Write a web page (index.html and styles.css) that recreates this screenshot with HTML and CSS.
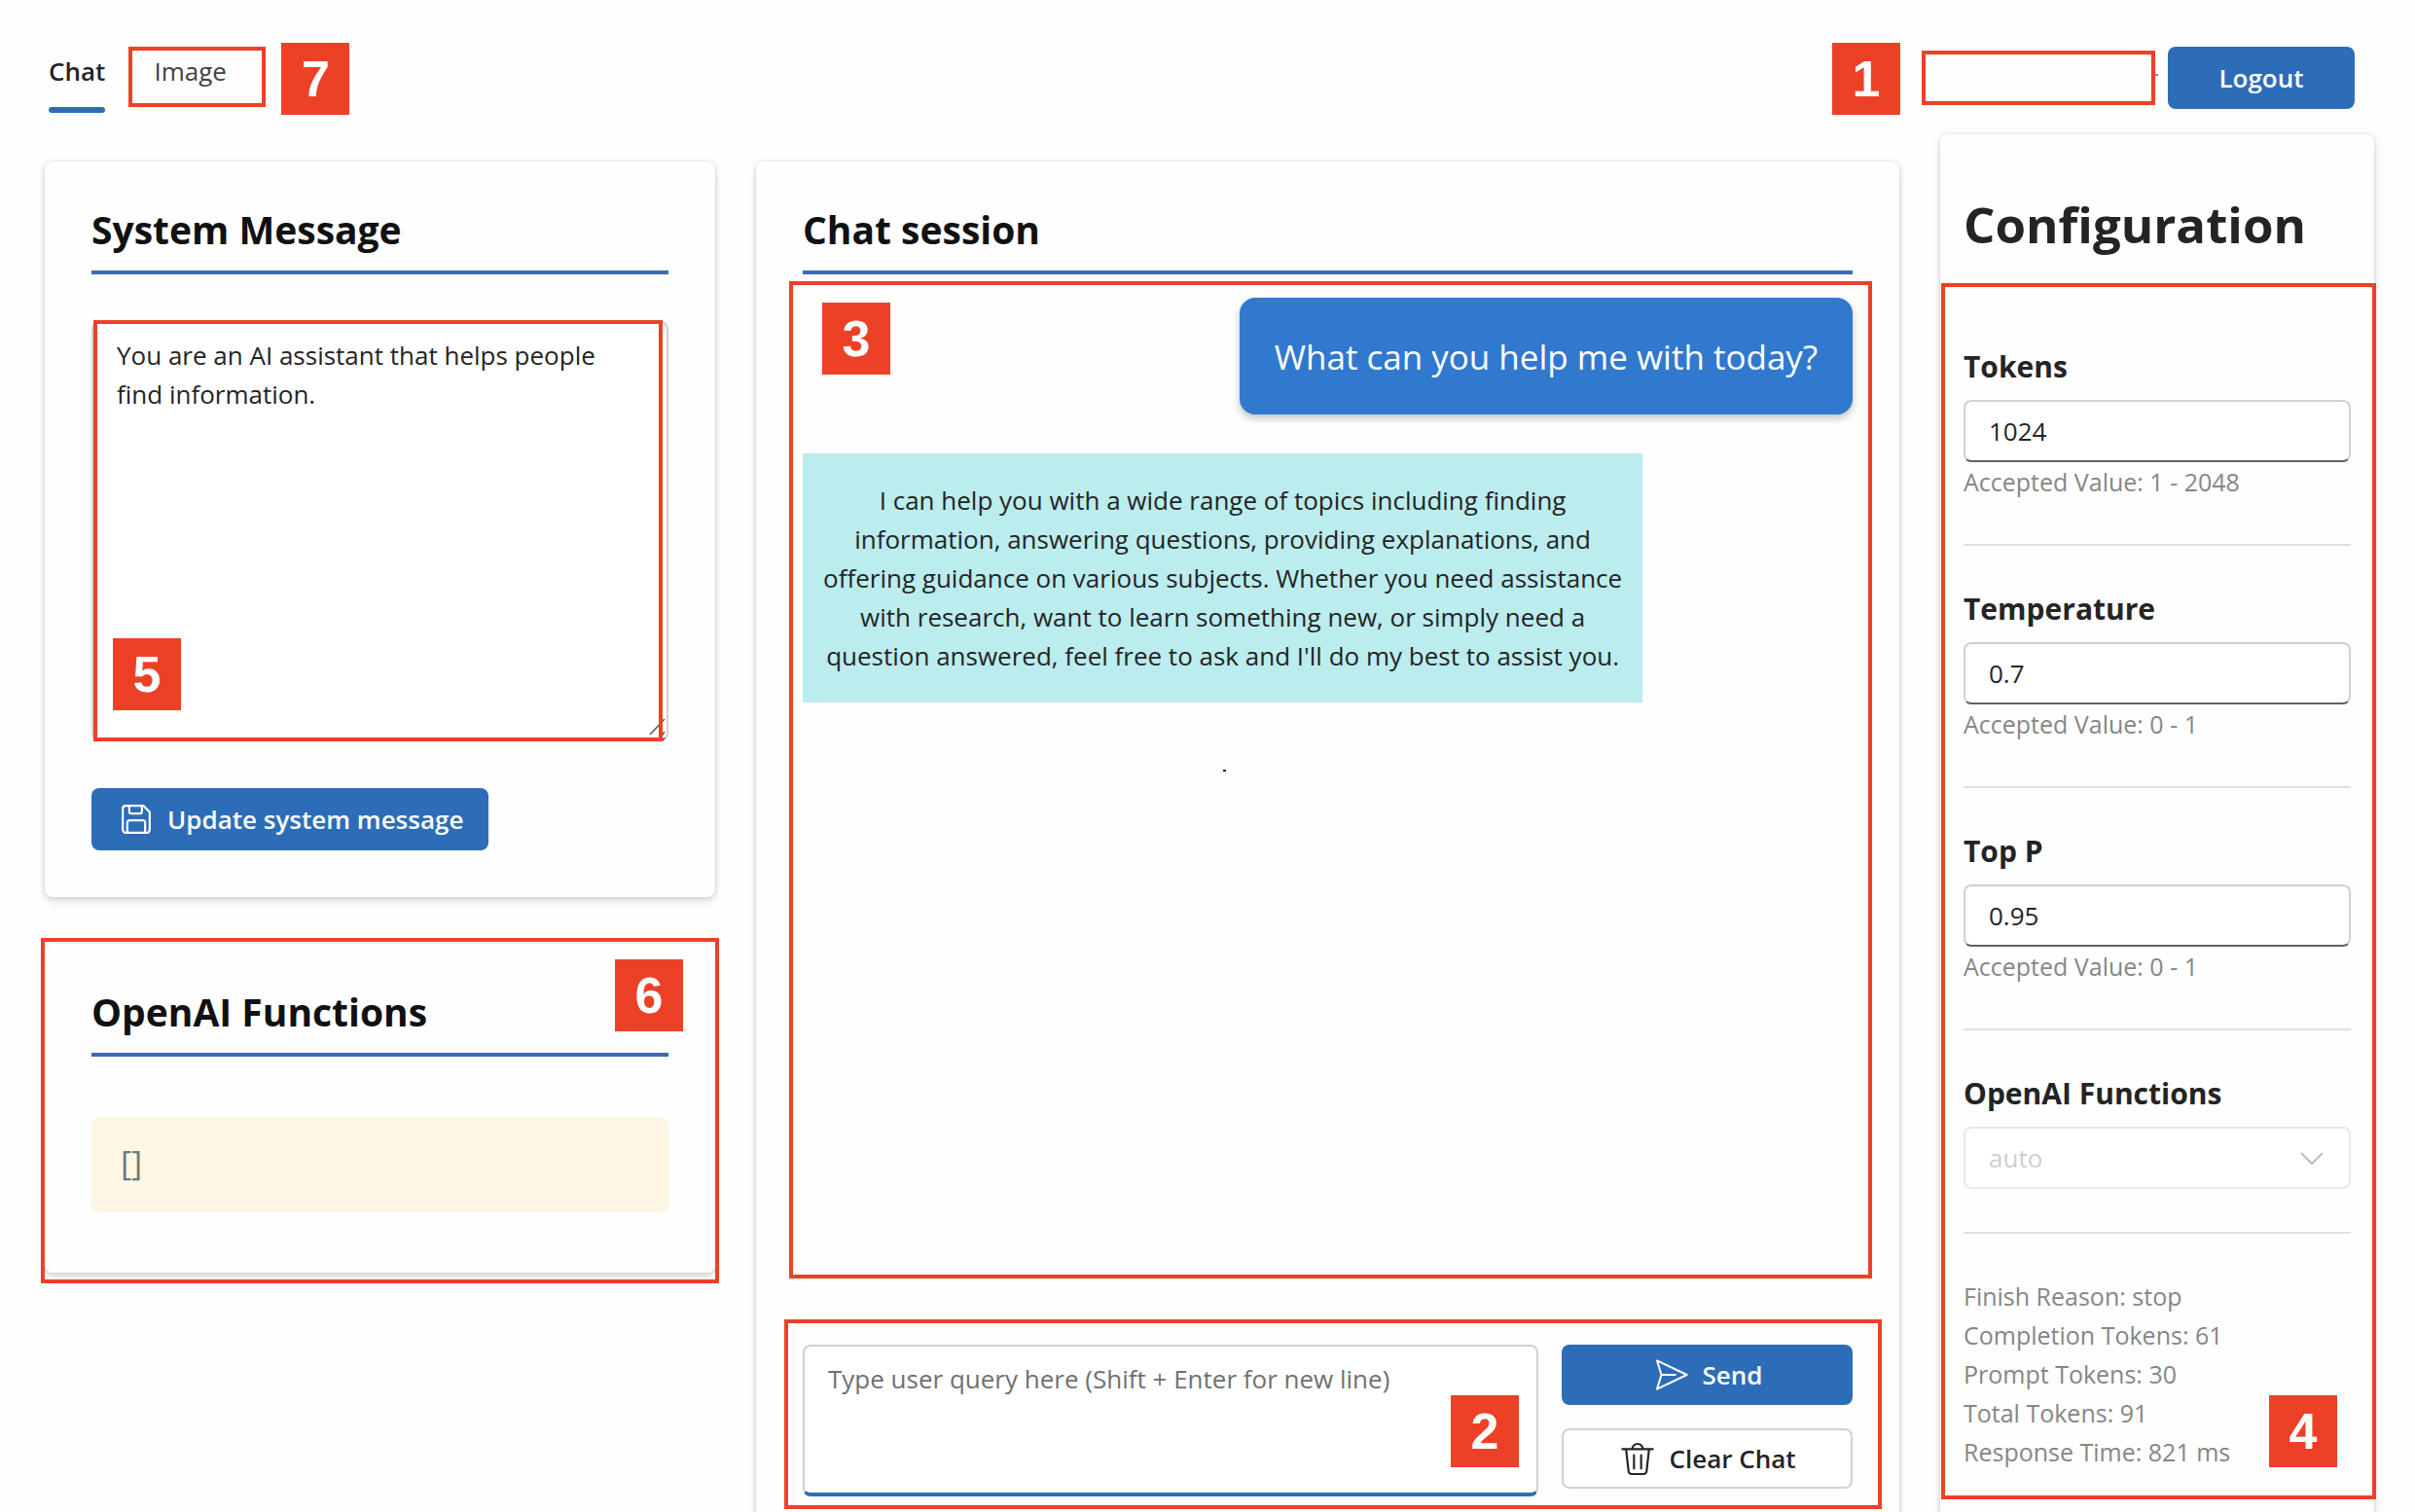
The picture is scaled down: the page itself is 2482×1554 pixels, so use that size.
FILE: index.html
```html
<!DOCTYPE html>
<html lang="en">
<head>
<meta charset="utf-8">
<meta name="viewport" content="width=device-width, initial-scale=1">
<title>Chat</title>
<link rel="stylesheet" href="styles.css">
</head>
<body>
<div class="app">
  <header class="topbar">
    <nav class="tabs">
      <a class="tab tab-active" href="#chat">Chat</a>
      <div class="anchor">
        <a class="tab" href="#image">Image</a>
        <span class="frame frame-tab"></span>
        <span class="badge badge-tab">7</span>
      </div>
    </nav>
    <div class="account">
      <span class="badge-inline">1</span>
      <span class="user"></span>
      <button class="btn btn-primary btn-logout" type="button">Logout</button>
    </div>
  </header>

  <main class="columns">
    <div class="side">
      <section class="card">
        <h2 class="card-title" id="system-title">System Message</h2>
        <div class="anchor system-box">
          <textarea class="textarea system-text" aria-labelledby="system-title">You are an AI assistant that helps people find information.</textarea>
          <svg class="grip" viewBox="0 0 18 24" aria-hidden="true"><path d="M1 17 16 1M9 24 16 14M13 24 16 20" fill="none" stroke="#555" stroke-width="1.5"/></svg>
          <span class="frame frame-system"></span>
          <span class="badge badge-system">5</span>
        </div>
        <button class="btn btn-primary btn-update" type="button">
          <svg class="icon" viewBox="0 0 24 24" aria-hidden="true"><g fill="none" stroke="currentColor" stroke-width="1.3" stroke-linejoin="round"><path d="M5.5 3.7H16.6L20.3 7.6V18.5A1.8 1.8 0 0 1 18.5 20.3H5.5A1.8 1.8 0 0 1 3.7 18.5V5.5A1.8 1.8 0 0 1 5.5 3.7Z"/><path d="M7.7 3.7V7.2A1.3 1.3 0 0 0 9 8.5H14.2A1.3 1.3 0 0 0 15.5 7.2V3.7M6.5 20.3V14.2A1.5 1.5 0 0 1 8 12.7H16A1.5 1.5 0 0 1 17.5 14.2V20.3"/></g></svg>
          Update system message
        </button>
      </section>

      <section class="card anchor">
        <h2 class="card-title">OpenAI Functions</h2>
        <pre class="code"><code>[]</code></pre>
        <span class="frame frame-functions"></span>
        <span class="badge badge-functions">6</span>
      </section>
    </div>

    <section class="card chat">
      <h2 class="card-title">Chat session</h2>
      <div class="log anchor">
        <p class="message message-user">What can you help me with today?</p>
        <p class="message message-reply">I can help you with a wide range of topics including finding information, answering questions, providing explanations, and offering guidance on various subjects. Whether you need assistance with research, want to learn something new, or simply need a question answered, feel free to ask and I'll do my best to assist you.</p>
        <div class="cursor-dot"></div>
        <span class="frame frame-log"></span>
        <span class="badge badge-log">3</span>
      </div>
      <form class="composer anchor">
        <div class="query anchor">
          <textarea class="textarea query-text" aria-label="User query" placeholder="Type user query here (Shift + Enter for new line)"></textarea>
          <span class="badge badge-query">2</span>
        </div>
        <div class="actions">
          <button class="btn btn-primary" type="button">
            <svg class="icon" viewBox="0 0 24 24" aria-hidden="true"><path d="M3 3.2 21.4 12 3 20.8 5.7 12ZM5.7 12H14.3" fill="none" stroke="currentColor" stroke-width="1.2" stroke-linejoin="round" stroke-linecap="round"/></svg>
            Send
          </button>
          <button class="btn btn-outline" type="button">
            <svg class="icon" viewBox="0 0 24 24" aria-hidden="true"><path d="M2.6 6.2H21.4M8.8 6.2A3.2 3.2 0 0 1 15.2 6.2M4.9 6.2 6.4 19.6A2 2 0 0 0 8.4 21.6H15.6A2 2 0 0 0 17.6 19.6L19.1 6.2M9.8 10V18.2M14.2 10V18.2" fill="none" stroke="currentColor" stroke-width="1.3" stroke-linecap="round"/></svg>
            Clear Chat
          </button>
        </div>
        <span class="frame frame-composer"></span>
      </form>
    </section>

    <aside class="card config">
      <h1 class="config-title">Configuration</h1>
      <div class="settings anchor">
        <div class="field">
          <label class="label" for="tokens">Tokens</label>
          <input class="input" id="tokens" type="text" value="1024">
          <span class="hint">Accepted Value: 1 - 2048</span>
        </div>
        <div class="field">
          <label class="label" for="temperature">Temperature</label>
          <input class="input" id="temperature" type="text" value="0.7">
          <span class="hint">Accepted Value: 0 - 1</span>
        </div>
        <div class="field">
          <label class="label" for="top-p">Top P</label>
          <input class="input" id="top-p" type="text" value="0.95">
          <span class="hint">Accepted Value: 0 - 1</span>
        </div>
        <div class="field">
          <label class="label" for="functions">OpenAI Functions</label>
          <div class="anchor select-box">
            <select class="input select" id="functions" disabled><option>auto</option></select>
            <svg class="chevron" viewBox="0 0 24 14" aria-hidden="true"><path d="M1 1 12 12 23 1" fill="none" stroke="#bdbdbd" stroke-width="2"/></svg>
          </div>
        </div>
        <ul class="stats">
          <li>Finish Reason: stop</li>
          <li>Completion Tokens: 61</li>
          <li>Prompt Tokens: 30</li>
          <li>Total Tokens: 91</li>
          <li>Response Time: 821 ms</li>
        </ul>
        <span class="frame frame-settings"></span>
        <span class="badge badge-settings">4</span>
      </div>
    </aside>
  </main>
</div>
</body>
</html>
```
FILE: styles.css
```css
:root {
  --ink: #242424;
  --muted: #868686;
  --brand: #2d6db8;
  --line: #d1d1d1;
  --mark: #ec4127;
}

* { box-sizing: border-box; }

body {
  margin: 0;
  background: #fefefe;
  color: var(--ink);
  font: 26px/40px "Open Sans", "Noto Sans", sans-serif;
}

h1, h2, p, ul, pre { margin: 0; padding: 0; }
button, input, select, textarea { font: inherit; color: inherit; }

.app { height: 100vh; overflow: hidden; }
.anchor { position: relative; }

/* Top bar */
.topbar {
  display: flex;
  justify-content: space-between;
  align-items: flex-start;
  height: 138px;
  padding: 48px 62px 0 50px;
}
.tabs { display: flex; gap: 50px; }
.tab {
  display: block;
  padding: 5px 0 17px;
  color: #424242;
  text-decoration: none;
}
.tab-active {
  color: var(--ink);
  font-weight: 600;
}
.tab-active::after {
  content: "";
  display: block;
  height: 6px;
  margin: 17px 0 -17px;
  border-radius: 4px;
  background: var(--brand);
}
.account { display: flex; align-items: center; }
.user {
  width: 240px;
  height: 56px;
  margin: 0 13px 0 22px;
  border: 4px solid var(--mark);
}
.user::after {
  content: "";
  display: block;
  width: 3px;
  height: 2px;
  margin: 20px 0 0 236px;
  background: #8a8a8a;
}

/* Buttons */
.btn {
  display: flex;
  align-items: center;
  justify-content: center;
  gap: 12px;
  height: 64px;
  padding: 0 26px;
  border: 0;
  border-radius: 8px;
  font-weight: 600;
}
.btn-primary { background: var(--brand); color: #fff; }
.btn-outline { background: #fff; border: 2px solid var(--line); }
.btn-logout { width: 192px; }
.btn-update { margin-top: 48px; }
.icon { width: 40px; height: 40px; flex: none; }

/* Columns and cards */
.columns {
  display: grid;
  grid-template-columns: 689fr 1175fr 446fr;
  gap: 42px;
  align-items: start;
  padding: 0 42px 0 46px;
}
.side {
  display: grid;
  gap: 48px;
  margin-top: 28px;
}
.card {
  padding: 46px 48px 48px;
  border-radius: 8px;
  background: #fefefe;
  box-shadow: 0 0 4px rgba(0, 0, 0, .12), 0 4px 8px rgba(0, 0, 0, .14);
}
.card-title {
  padding-bottom: 18px;
  border-bottom: 4px solid #3f6ab2;
  color: #111;
  font-size: 39px;
  font-weight: 700;
  line-height: 48px;
}

.textarea {
  display: block;
  width: 100%;
  padding: 13px 24px;
  border: 2px solid var(--line);
  border-radius: 8px;
  background: #fff;
  outline: 0;
  resize: none;
}
.system-box { margin-top: 48px; }
.system-text { height: 432px; }
.grip {
  position: absolute;
  right: 2px;
  bottom: 0;
  width: 18px;
  height: 24px;
}
.code {
  margin: 62px 0 14px;
  padding: 27px 30px 31px;
  border-radius: 8px;
  background: #fcf6e3;
  color: #657b83;
  font: 34px/40px "Open Sans", sans-serif;
}
.code code { font: inherit; }

/* Chat */
.chat { margin-top: 28px; }
.log {
  display: flex;
  flex-direction: column;
  align-items: flex-start;
  height: calc(100vh - 524px);
  padding-top: 24px;
}
.message-user {
  align-self: flex-end;
  padding: 37px 36px 35px;
  border-radius: 16px;
  background: #3079cf;
  box-shadow: 0 4px 8px rgba(0, 0, 0, .24);
  color: #fff;
  font-size: 35px;
  line-height: 48px;
}
.message-reply {
  width: 80%;
  margin-top: 40px;
  padding: 28px 12px;
  background: #bbecee;
  text-align: center;
}
.cursor-dot {
  width: 3px;
  height: 2px;
  margin: 69px 0 0 40%;
  background: var(--ink);
}
.composer {
  display: grid;
  grid-template-columns: 1fr 299px;
  gap: 24px;
  margin-top: 70px;
}
.query-text {
  height: 156px;
  border-bottom: 4px solid var(--brand);
}
.query-text::placeholder { color: #707070; opacity: 1; }
.actions {
  display: grid;
  gap: 24px;
  align-content: start;
}
.actions .btn { height: 62px; }

/* Configuration */
.config { padding: 56px 24px 48px; }
.config-title {
  font-size: 51px;
  font-weight: 700;
  line-height: 72px;
}
.settings { margin-top: 90px; }
.field {
  display: flex;
  flex-direction: column;
  margin-bottom: 44px;
  padding-bottom: 44px;
  border-bottom: 2px solid #e0e0e0;
}
.label {
  margin-bottom: 13px;
  font-size: 30px;
  font-weight: 700;
  line-height: 42px;
}
.input {
  width: 100%;
  height: 64px;
  padding: 0 24px;
  border: 2px solid var(--line);
  border-bottom-color: #616161;
  border-radius: 8px;
  background: #fff;
}
.hint, .stats { color: var(--muted); font-size: 25px; }
.select-box { height: 64px; }
.select {
  appearance: none;
  border-color: #e8e8e8;
  color: #cfcfcf;
  opacity: 1;
}
.chevron {
  position: absolute;
  top: 26px;
  right: 28px;
  width: 24px;
  height: 14px;
}
.stats { list-style: none; }

/* Numbered callouts */
.frame {
  position: absolute;
  border: 4px solid var(--mark);
  pointer-events: none;
}
.badge, .badge-inline {
  width: 70px;
  height: 74px;
  background: var(--mark);
  color: #fff;
  font: 700 52px/74px "Liberation Sans", Arial, sans-serif;
  text-align: center;
}
.badge { position: absolute; }
.badge-inline { margin: -4px 0 -6px; }
.frame-tab { inset: 0 -40px 6px -26px; }
.badge-tab { top: -4px; left: 131px; }
.frame-system { inset: -1px 6px 0 2px; }
.badge-system { left: 22px; bottom: 32px; }
.frame-functions { inset: -6px -4px -11px; }
.badge-functions { top: 16px; right: 33px; }
.frame-log { inset: 7px -20px -2px -14px; }
.badge-log { top: 29px; left: 20px; }
.frame-composer { inset: -26px -30px -13px -19px; }
.badge-query { right: 20px; bottom: 30px; }
.frame-settings { inset: -65px -26px -29px -23px; }
.badge-settings { right: 14px; bottom: 4px; }
```
